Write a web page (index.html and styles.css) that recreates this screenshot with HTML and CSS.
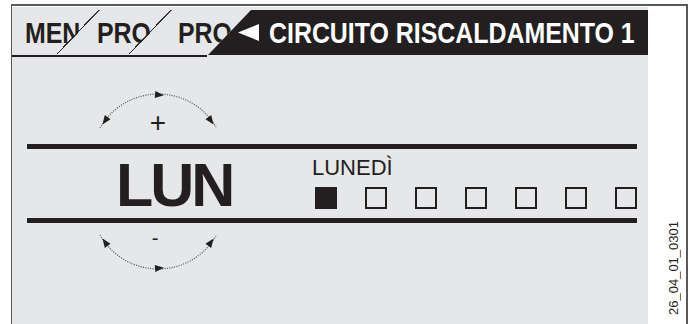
FILE: index.html
```html
<!DOCTYPE html>
<html lang="it">
<head>
    <meta charset="UTF-8">
    <meta name="viewport" content="width=device-width, initial-scale=1.0">
    <title>Circuito riscaldamento 1</title>
    <link rel="stylesheet" href="styles.css">
</head>
<body>
    <div class="frame">
        <div class="panel">
            <div class="header">
                <div class="tabs">
                    <span class="tab tab-men"><span class="narrow">MEN</span></span>
                    <span class="tab tab-pro"><span class="narrow">PRO</span></span>
                    <span class="tab tab-pro2"><span class="narrow">PRO</span></span>
                    <span class="tab-active">
                        <svg class="back" width="21" height="17" viewBox="0 0 21 17"><polygon points="0,8.5 21,0 21,17" fill="#fff"/></svg>
                        <span class="narrow title">CIRCUITO RISCALDAMENTO 1</span>
                    </span>
                </div>
                <div class="tabline"></div>
            </div>

            <svg class="arc arc-up" width="130" height="52" viewBox="0 0 130 52">
                <path d="M5,38 A67,67 0 0 1 121,37" fill="none" stroke="#4d4d4f" stroke-width="1.2" stroke-dasharray="1 1.4"/>
                <polygon points="0,0 -9,-3.5 -9,3.5" fill="#231f20" transform="translate(7.5 34.5) rotate(125)"/>
                <polygon points="0,0 -9,-3.5 -9,3.5" fill="#231f20" transform="translate(69 5.3) rotate(5)"/>
                <polygon points="0,0 -9,-3.5 -9,3.5" fill="#231f20" transform="translate(118.5 34.5) rotate(55)"/>
                <text x="63" y="42" class="sign">+</text>
            </svg>

            <div class="divider"></div>
            <div class="day-row">
                <div class="day-short">LUN</div>
                <div class="day-pick">
                    <div class="day-name">LUNEDÌ</div>
                    <div class="day-boxes">
                        <span class="box on"></span>
                        <span class="box"></span>
                        <span class="box"></span>
                        <span class="box"></span>
                        <span class="box"></span>
                        <span class="box"></span>
                        <span class="box"></span>
                    </div>
                </div>
            </div>
            <div class="divider"></div>

            <svg class="arc arc-down" width="130" height="55" viewBox="0 -10 130 55">
                <path d="M5,5 A67,67 0 0 0 121,6" fill="none" stroke="#4d4d4f" stroke-width="1.2" stroke-dasharray="1 1.4"/>
                <polygon points="0,0 -9,-3.5 -9,3.5" fill="#231f20" transform="translate(7.5 8.5) rotate(-125)"/>
                <polygon points="0,0 -9,-3.5 -9,3.5" fill="#231f20" transform="translate(69 37.7) rotate(-5)"/>
                <polygon points="0,0 -9,-3.5 -9,3.5" fill="#231f20" transform="translate(118.5 8.5) rotate(-55)"/>
                <text x="60" y="15" class="sign minus">-</text>
            </svg>
        </div>
        <div class="side">
            <span class="code">26_04_01_0301</span>
        </div>
    </div>
</body>
</html>
```

FILE: styles.css
```css
body {
    margin: 0;
    overflow: hidden;
    background-color: #fff;
    font-family: "Liberation Sans", Arial, sans-serif;
    color: #231f20;
}

.frame {
    display: flex;
    margin: 4px 0 0 11px;
    width: 674px;
    height: 318px;
    border-top: 2px solid #58595b;
    border-left: 1px solid #58595b;
    border-right: 2px solid #58595b;
}

.panel {
    width: 636px;
    margin-top: 1px;
    background-color: #e6e7e8;
}

/* header with folded tabs */
.header {
    height: 50px;
    padding-top: 3px;
    box-sizing: border-box;
}

.tabs {
    display: flex;
    height: 45px;
}

.tab {
    height: 45px;
    line-height: 45px;
    box-sizing: border-box;
    white-space: nowrap;
    clip-path: polygon(0 0, 100% 0, calc(100% - 43px) 100%, 0 100%);
    background: linear-gradient(to bottom right, transparent calc(50% - 1.2px), #231f20 calc(50% - 1.2px), #231f20 50%, transparent 50%) right top / 43px 100% no-repeat;
}

/* condensed bold lettering of the display */
.narrow {
    display: inline-block;
    font-weight: bold;
    font-size: 30px;
    white-space: nowrap;
    transform: scaleX(0.83);
    transform-origin: left center;
}

.tab-men {
    width: 88px;
    padding-left: 13px;
}

.tab-pro {
    width: 115px;
    margin-left: -43px;
    padding-left: 40px;
}

.tab-pro2 {
    width: 122px;
    margin-left: -43px;
    padding-left: 49px;
    background: none;
}

.tab-active {
    flex: 1;
    display: flex;
    align-items: center;
    overflow: hidden;
    margin-left: -43px;
    padding-left: 30px;
    background-color: #231f20;
    color: #fff;
    clip-path: polygon(43px 0, 100% 0, 100% 100%, 0 100%);
}

.back {
    display: block;
    flex-shrink: 0;
    margin-right: 10px;
}

.tabline {
    width: 195px;
    height: 2px;
    background-color: #231f20;
}

/* rotation arrows */
.arc {
    display: block;
    margin-left: 83px;
}

.arc-up {
    margin-top: 33px;
    margin-bottom: 2px;
}

.arc-down {
    margin-top: -3px;
}

.sign {
    font-family: "Liberation Sans", sans-serif;
    font-size: 28px;
    fill: #231f20;
    text-anchor: middle;
}

.sign.minus {
    font-size: 20px;
}

.divider {
    height: 5px;
    margin: 0 11px 0 15px;
    background-color: #231f20;
}

/* day selection */
.day-row {
    display: flex;
    height: 69px;
}

.day-short {
    width: 300px;
    padding: 4px 0 0 104px;
    box-sizing: border-box;
    font-weight: bold;
    font-size: 61px;
    line-height: 65px;
    letter-spacing: -3px;
}

.day-pick {
    padding-top: 6px;
}

.day-name {
    font-size: 22px;
    line-height: 26px;
}

.day-boxes {
    display: flex;
    gap: 28px;
    margin: 6px 0 0 3px;
}

.box {
    width: 22px;
    height: 22px;
    box-sizing: border-box;
    border: 2px solid #231f20;
}

.box.on {
    background-color: #231f20;
}

/* drawing code */
.side {
    flex: 1;
    display: flex;
    flex-direction: column;
    justify-content: flex-end;
    padding: 0 0 9px 18px;
}

.code {
    writing-mode: vertical-rl;
    transform: rotate(180deg);
    font-size: 13px;
    line-height: 15px;
    color: #231f20;
}
```
